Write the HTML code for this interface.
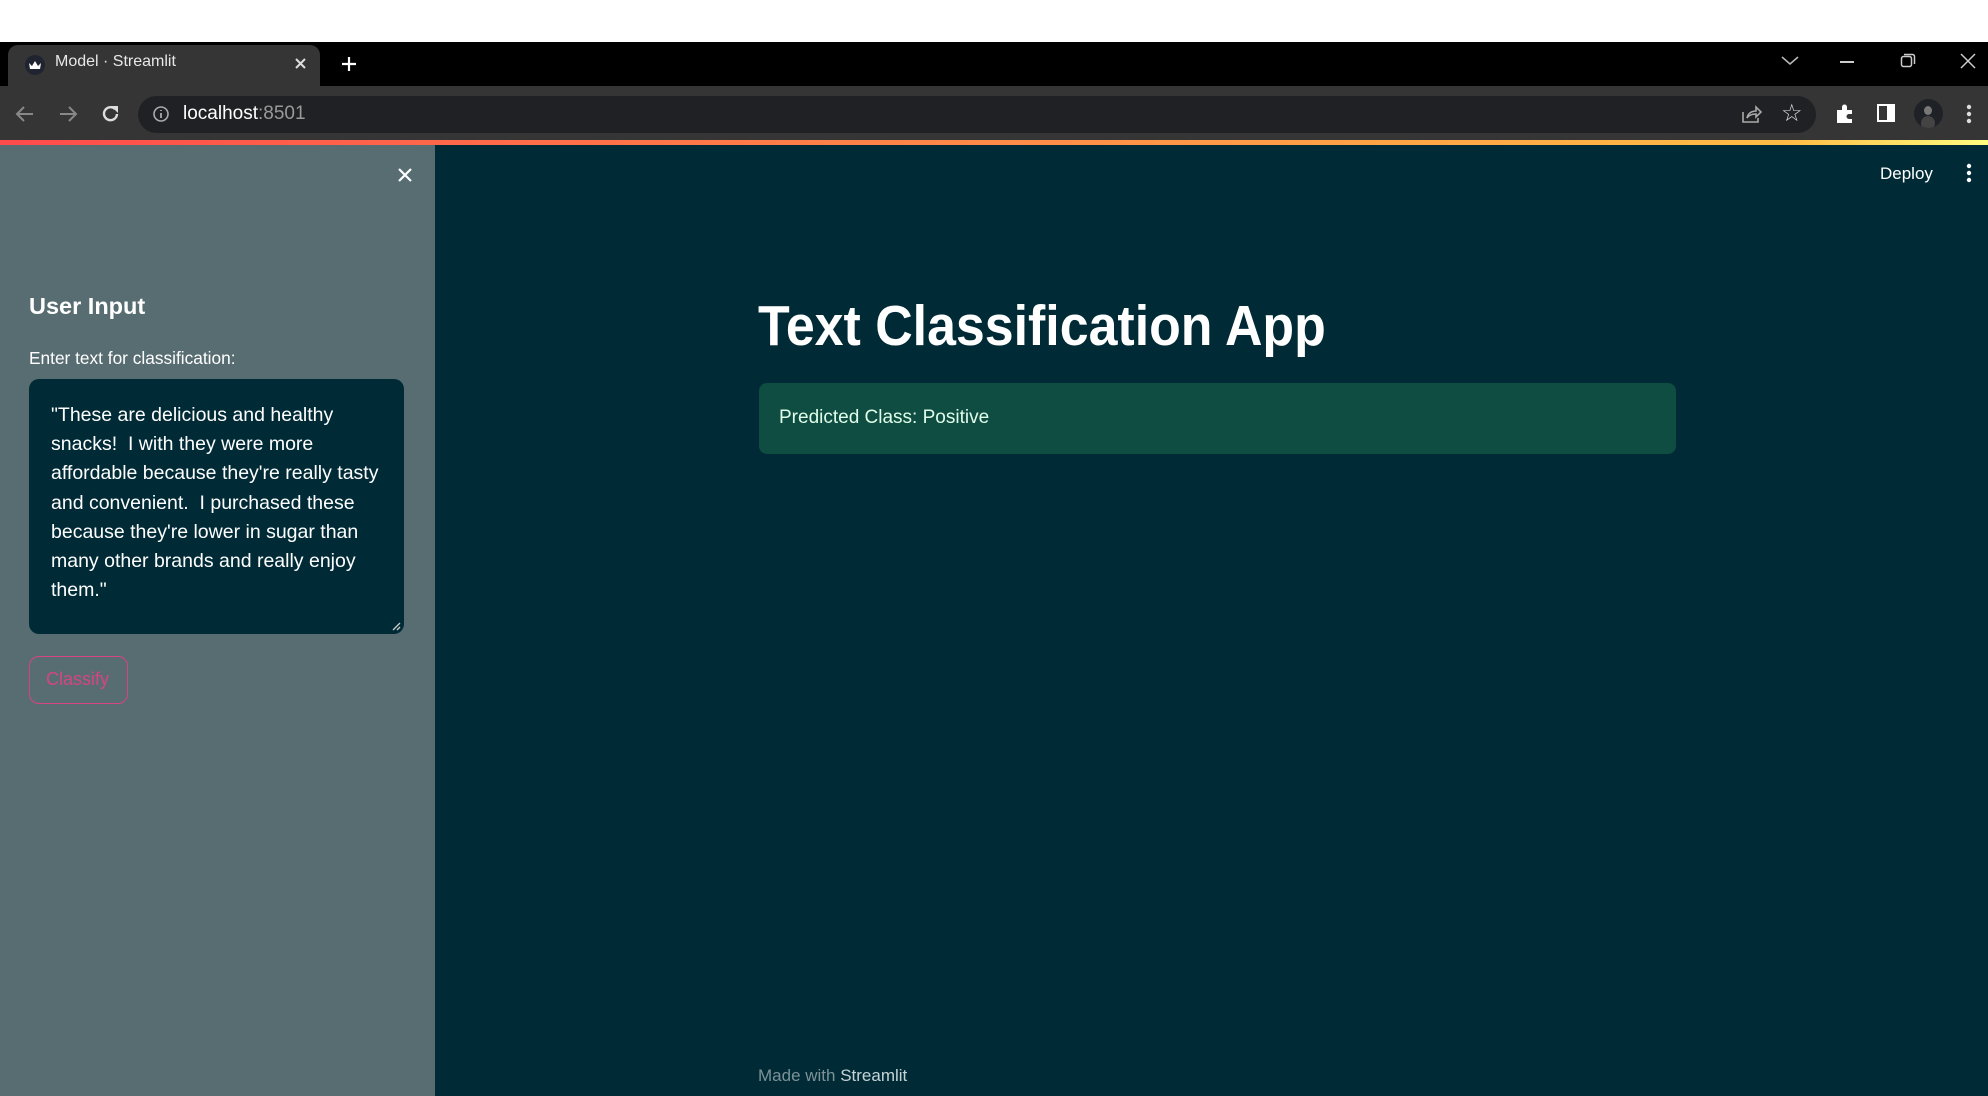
<!DOCTYPE html>
<html><head><meta charset="utf-8"><style>
*{margin:0;padding:0;box-sizing:border-box}
body{width:1988px;height:1096px;overflow:hidden;background:#fff;font-family:"Liberation Sans",sans-serif;position:relative}
.abs{position:absolute}
#tabs{left:0;top:42px;width:1988px;height:44px;background:#000}
#tab{left:8px;top:45px;width:312px;height:41px;background:#353535;border-radius:10px 10px 0 0}
#toolbar{left:0;top:86px;width:1988px;height:54px;background:#353535}
#url{left:138px;top:96px;width:1678px;height:37px;background:#202124;border-radius:19px}
#grad{left:0;top:140px;width:1988px;height:5px;background:linear-gradient(90deg,#ff4b4b,#ffbd45 90%,#fffd80)}
#side{left:0;top:145px;width:435px;height:951px;background:#586d72}
#main{left:435px;top:145px;width:1553px;height:951px;background:#002b36}
.t{color:#fff;white-space:nowrap}
</style></head><body>
<div id="tabs" class="abs"></div>
<div id="tab" class="abs"></div>
<div class="abs" style="left:25px;top:55px;width:20px;height:20px;border-radius:50%;background:#1f2430"></div>
<svg class="abs" style="left:28px;top:58px" width="14" height="14" viewBox="0 0 14 14"><path d="M1 5 L4 8 L7 3 L10 8 L13 5 L12 11 L2 11Z" fill="#fff"/></svg>
<div class="abs t" style="left:55px;top:53px;font-size:16px;color:#e8e8e8">Model · Streamlit</div>
<svg class="abs" style="left:294px;top:57px" width="13" height="13"><path d="M2 2L11 11M11 2L2 11" stroke="#ddd" stroke-width="2"/></svg>
<svg class="abs" style="left:340px;top:55px" width="18" height="18"><path d="M9 2V16M2 9H16" stroke="#fff" stroke-width="2.2"/></svg>
<svg class="abs" style="left:1780px;top:55px" width="20" height="12"><path d="M2 2L10 9L18 2" stroke="#bbb" stroke-width="1.5" fill="none"/></svg>
<div class="abs" style="left:1840px;top:61px;width:14px;height:1.5px;background:#ccc"></div>
<svg class="abs" style="left:1900px;top:53px" width="16" height="16"><rect x="1.5" y="3.5" width="10" height="10" rx="2" stroke="#ccc" fill="none" stroke-width="1.5"/><path d="M4 1.5H12.5a2 2 0 0 1 2 2V11" stroke="#ccc" fill="none" stroke-width="1.5"/></svg>
<svg class="abs" style="left:1960px;top:53px" width="16" height="16"><path d="M1 1L15 15M15 1L1 15" stroke="#ccc" stroke-width="1.5"/></svg>
<div id="toolbar" class="abs"></div>
<svg class="abs" style="left:14px;top:104px" width="22" height="20"><path d="M19 10H3M10 3L3 10L10 17" stroke="#888" stroke-width="2" fill="none"/></svg>
<svg class="abs" style="left:57px;top:104px" width="22" height="20"><path d="M3 10H19M12 3L19 10L12 17" stroke="#888" stroke-width="2" fill="none"/></svg>
<svg class="abs" style="left:100px;top:103px" width="22" height="22"><path d="M17 11A6.5 6.5 0 1 1 15 6" stroke="#ddd" stroke-width="2.4" fill="none"/><path d="M11 3H18V10Z" fill="#ddd"/></svg>
<div id="url" class="abs"></div>
<svg class="abs" style="left:152px;top:105px" width="18" height="18"><circle cx="9" cy="9" r="7" stroke="#aaa" stroke-width="1.6" fill="none"/><path d="M9 8V13M9 5V6" stroke="#aaa" stroke-width="1.8"/></svg>
<div class="abs t" style="left:183px;top:103px;font-size:19px"><span style="color:#fff">localhost</span><span style="color:#9a9a9a">:8501</span></div>
<svg class="abs" style="left:1740px;top:103px" width="22" height="22"><path d="M3 9V19H18V15" stroke="#aaa" stroke-width="1.6" fill="none"/><path d="M7 15C8 10 12 8 16 8V4L21 9L16 14V11C12 11 9 12 7 15Z" stroke="#aaa" stroke-width="1.6" fill="none"/></svg>
<div class="abs" style="left:1781px;top:99px;font-size:24px;color:#ddd">☆</div>
<svg class="abs" style="left:1834px;top:103px" width="22" height="22"><path d="M3 7H8V4a2.5 2.5 0 0 1 5 0V7H18V11H15a2.5 2.5 0 0 0 0 5H18V20H3Z" fill="#fff"/></svg>
<div class="abs" style="left:1877px;top:104px;width:18px;height:18px;border:2px solid #fff;border-right-width:8px"></div>
<div class="abs" style="left:1914px;top:99px;width:29px;height:29px;border-radius:50%;background:#1e2126;overflow:hidden"><div style="position:absolute;left:10px;top:7px;width:8px;height:9px;border-radius:50%;background:#777"></div><div style="position:absolute;left:7px;top:17px;width:14px;height:14px;border-radius:50%;background:#444"></div></div>
<svg class="abs" style="left:1966px;top:104px" width="6" height="20"><circle cx="3" cy="3" r="2.2" fill="#ddd"/><circle cx="3" cy="10" r="2.2" fill="#ddd"/><circle cx="3" cy="17" r="2.2" fill="#ddd"/></svg>
<div id="grad" class="abs"></div>
<div id="side" class="abs"></div>
<div id="main" class="abs"></div>
<svg class="abs" style="left:397px;top:167px" width="16" height="16"><path d="M2 2L14 14M14 2L2 14" stroke="#fff" stroke-width="2.2"/></svg>
<div class="abs t" style="left:29px;top:293px;font-size:23.5px;font-weight:bold">User Input</div>
<div class="abs t" style="left:29px;top:348px;font-size:17.3px">Enter text for classification:</div>
<div class="abs" style="left:29px;top:379px;width:375px;height:255px;background:#002b36;border-radius:10px"></div>
<div class="abs" style="left:51px;top:401px;width:345px;font-size:19.5px;line-height:29.2px;color:#fff;white-space:nowrap">"These are delicious and healthy<br>snacks!&nbsp; I with they were more<br>affordable because they're really tasty<br>and convenient.&nbsp; I purchased these<br>because they're lower in sugar than<br>many other brands and really enjoy<br>them."</div>
<svg class="abs" style="left:391px;top:621px" width="10" height="10"><path d="M2 9L9 2M6 9L9 6" stroke="#ccc" stroke-width="1.3"/></svg>
<div class="abs" style="left:29px;top:656px;width:99px;height:48px;border:1.5px solid #d6457f;border-radius:10px"></div>
<div class="abs t" style="left:46px;top:669px;font-size:18px;color:#d6457f">Classify</div>
<div class="abs t" style="left:1880px;top:164px;font-size:17px">Deploy</div>
<svg class="abs" style="left:1966px;top:163px" width="6" height="20"><circle cx="3" cy="3" r="2.2" fill="#fff"/><circle cx="3" cy="10" r="2.2" fill="#fff"/><circle cx="3" cy="17" r="2.2" fill="#fff"/></svg>
<div class="abs t" style="left:758px;top:293px;font-size:57px;font-weight:bold;transform:scaleX(0.91);transform-origin:left">Text Classification App</div>
<div class="abs" style="left:759px;top:383px;width:917px;height:71px;background:#0f4c42;border-radius:8px"></div>
<div class="abs t" style="left:779px;top:407px;font-size:19px;color:#dffde9">Predicted Class: Positive</div>
<div class="abs t" style="left:758px;top:1066px;font-size:17px;color:#7c9198">Made with <span style="color:#c5d3d6">Streamlit</span></div>
</body></html>
